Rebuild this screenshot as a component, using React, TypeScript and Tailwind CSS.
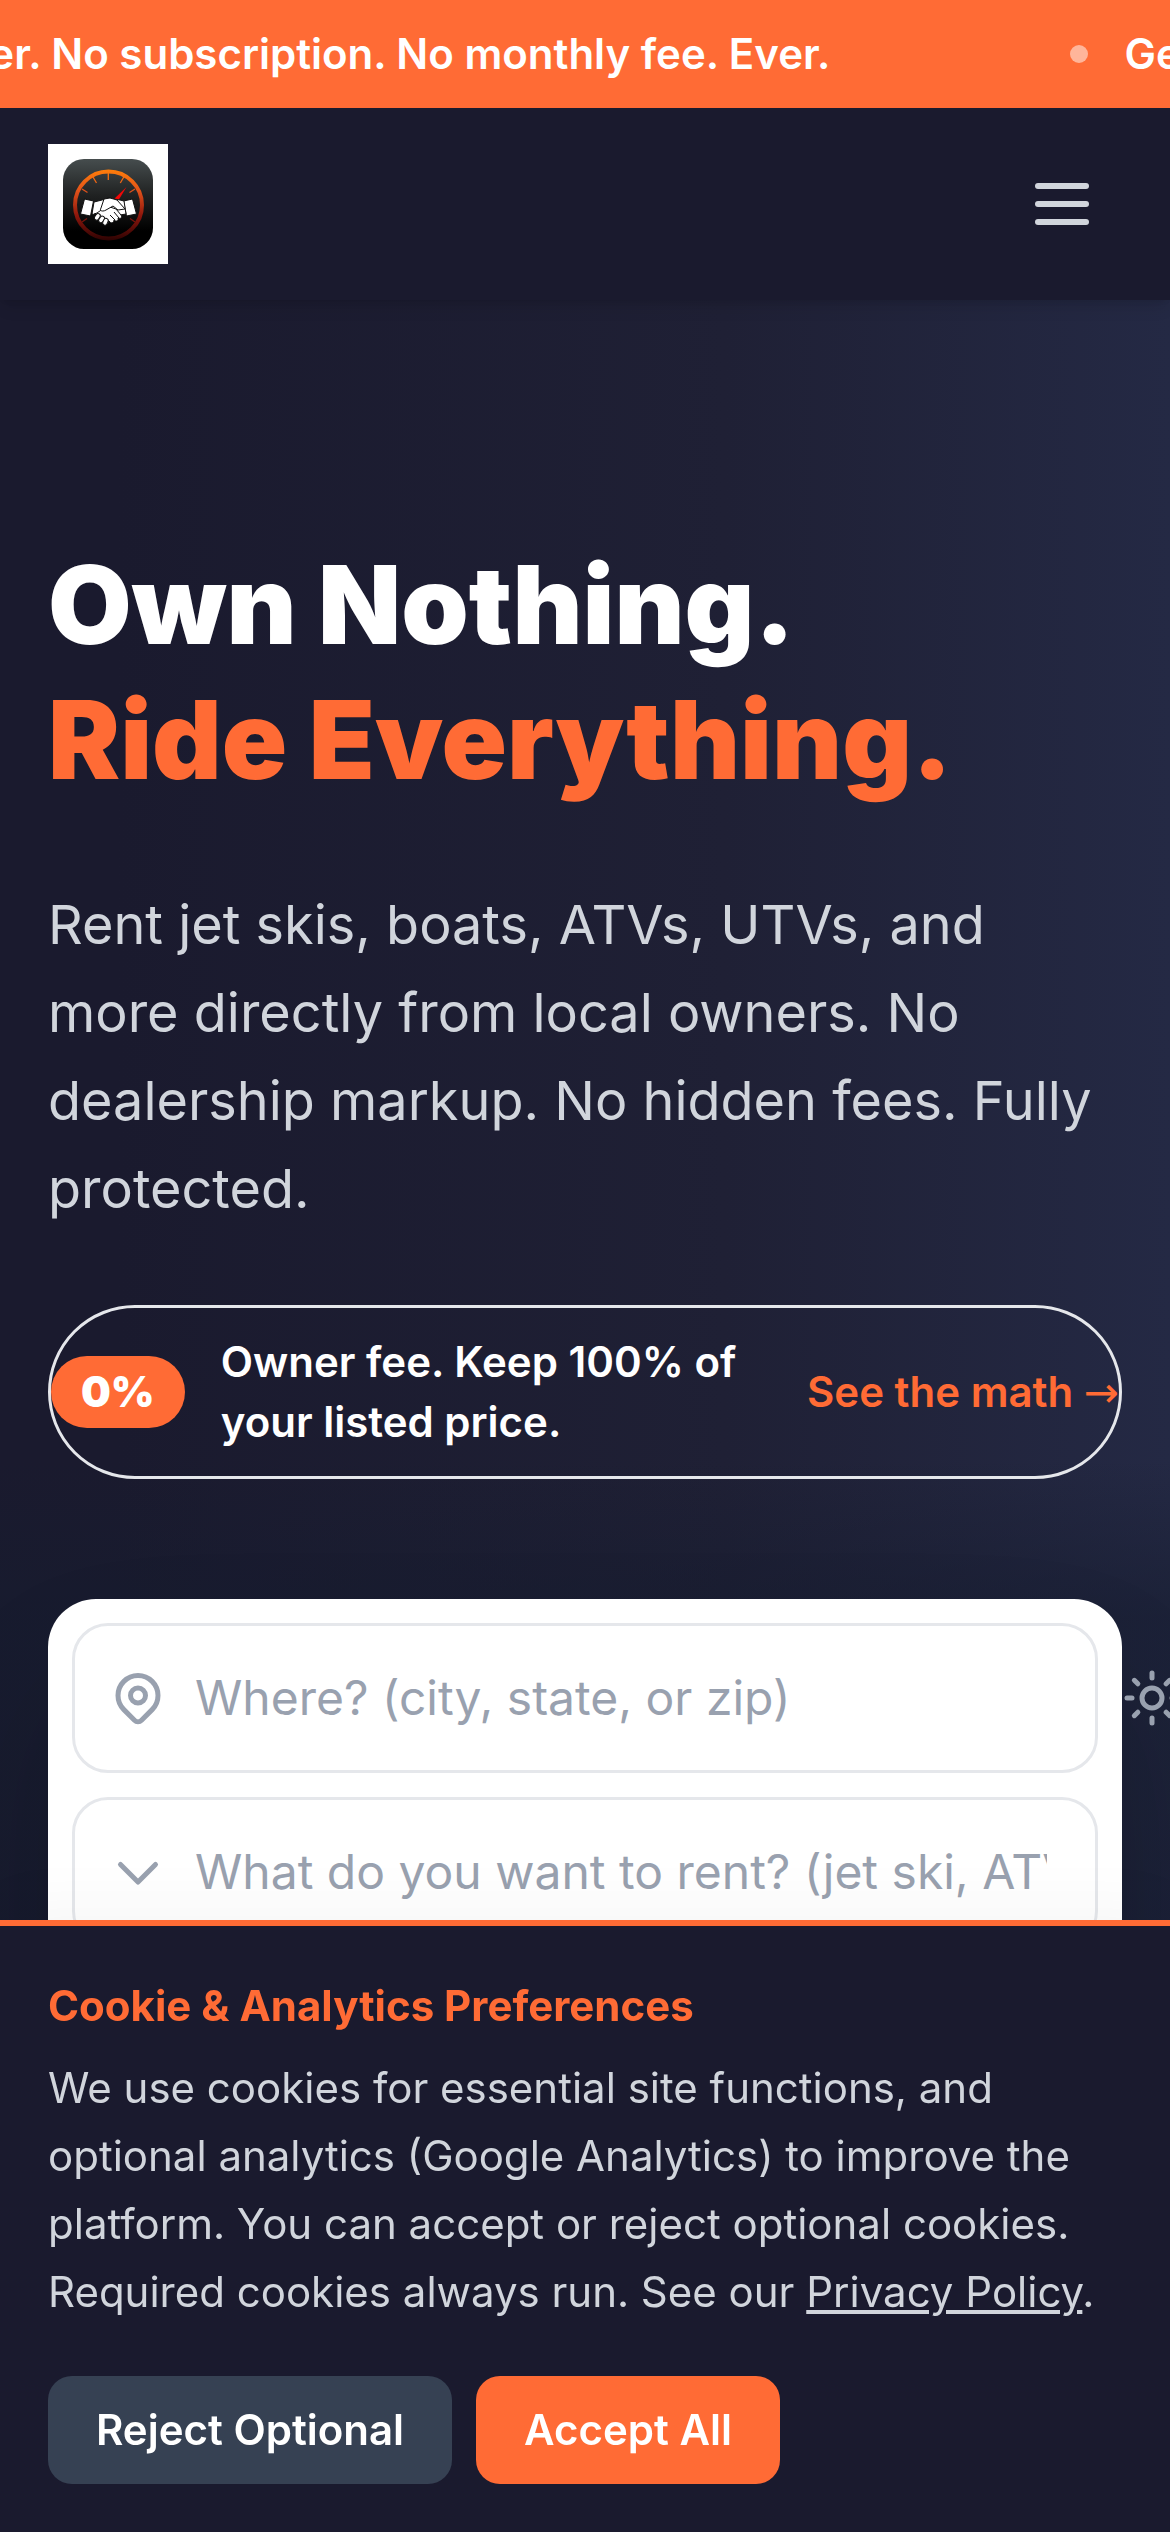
import React from 'react';
import { Sun } from 'lucide-react';

const fieldClass =
  'block w-full rounded-[36px] border-3 border-gray-200 bg-transparent py-9 pl-30 pr-12 text-[48px] leading-[72px] text-gray-900 placeholder-gray-400 focus:border-[#ff6b35] focus:outline-none';

const LogoMark: React.FC = () => (
  <svg viewBox="0 0 120 120" className="size-30" role="img" aria-label="Home">
    <defs>
      <linearGradient id="tile" x1="0" y1="0" x2="0" y2="1">
        <stop offset="0" stopColor="#464d4e" />
        <stop offset="0.4" stopColor="#202222" />
        <stop offset="0.8" stopColor="#000" />
      </linearGradient>
      <linearGradient id="dial" gradientUnits="userSpaceOnUse" x1="0" y1="25" x2="0" y2="97">
        <stop offset="0" stopColor="#ff7f0a" />
        <stop offset="0.3" stopColor="#e2521a" />
        <stop offset="0.65" stopColor="#8d160c" />
        <stop offset="1" stopColor="#2a0202" />
      </linearGradient>
    </defs>
    <rect width="120" height="120" fill="#fff" />
    <rect x="15" y="15" width="90" height="90" rx="21" fill="url(#tile)" />
    <g fill="none" stroke="url(#dial)">
      <circle cx="60.500" cy="61" r="33.500" strokeWidth="4" />
      <path
        strokeWidth="1.300"
        d="M60.300 29v7M45 33l3.500 6M75.800 33l-3.500 6M34 45l5.500 3.500M87 45l-5.500 3.500M34 78l5-3.500M87 78l-5-3.500"
      />
    </g>
    <path d="M78.500 43 66 55l4 2z" fill="#f00808" />
    {/* Handshake */}
    <g fill="#fff" stroke="#111" strokeWidth="1" strokeLinejoin="round">
      <path d="M36.500 55l9 2-3 15-10-2z" />
      <path d="M84.500 55l-9 2 3 15 10-2z" />
      <path d="M46 58l8-2 6-2 12 2 4 1 2 13-6 1-6-5-8-4-9 9-5-1z" />
      <path d="M46 70l3-1 10-7 9 3 5 6c2 3-1 4-3 3 1 3-2 4-4 2 0 3-3 4-5 1-1 4-5 5-7 2-3 0-4-2-4-3-3-1-4-3-1-5z" />
      <path d="M56 55l6-1 7 2 8 9-7 1-5-4-7 4c-3 2-7 1-5-2z" />
      <path fill="none" d="M66 68l5 6M62 71l5 5M58 74l3 4" />
      <rect x="47.500" y="69" width="4.500" height="7" rx="2.200" transform="rotate(35 49 72)" />
      <rect x="51.500" y="71.500" width="4.500" height="7" rx="2.200" transform="rotate(35 53 75)" />
      <rect x="55.500" y="74" width="4.500" height="7" rx="2.200" transform="rotate(25 57 77)" />
    </g>
  </svg>
);

const Announcement: React.FC = () => (
  <div className="flex h-27 items-center overflow-hidden whitespace-nowrap bg-[#ff6b35] text-[42px] leading-[60px] font-semibold text-white">
    <p className="-ml-15 shrink-0">Ever. No subscription. No monthly fee. Ever.</p>
    <p className="ml-60 flex shrink-0 items-center gap-9">
      <span className="size-[18px] rounded-full bg-white/50" />
      Get started
    </p>
  </div>
);

const Header: React.FC = () => (
  <header className="relative z-10 flex h-48 items-center justify-between bg-[#1a1a2e] px-12 shadow-lg">
    <a href="#">
      <LogoMark />
    </a>
    <button type="button" aria-label="Open menu" className="flex flex-col gap-3 p-[33px]">
      <span className="h-1.5 w-[54px] rounded-[3px] bg-gray-300" />
      <span className="h-1.5 w-[54px] rounded-[3px] bg-gray-300" />
      <span className="h-1.5 w-[54px] rounded-[3px] bg-gray-300" />
    </button>
  </header>
);

const FieldIcon: React.FC<{ children: React.ReactNode }> = ({ children }) => (
  <svg
    viewBox="0 0 24 24"
    className="pointer-events-none absolute top-[45px] left-9 size-15 text-gray-400"
    fill="none"
    stroke="currentColor"
    strokeWidth="2"
    strokeLinecap="round"
    strokeLinejoin="round"
  >
    {children}
  </svg>
);

const SearchCard: React.FC = () => (
  <div className="relative mt-30">
    <form className="flex flex-col gap-6 rounded-[48px] bg-white p-6 pb-48 shadow-[0_75px_150px_-36px_rgba(0,0,0,0.25)]">
      <div className="relative">
        <FieldIcon>
          <path d="M17.657 16.657L13.414 20.900a2 2 0 01-2.827 0l-4.244-4.243a8 8 0 1111.314 0z" />
          <path d="M15 11a3 3 0 11-6 0 3 3 0 016 0z" />
        </FieldIcon>
        <input type="text" aria-label="Location" placeholder="Where? (city, state, or zip)" className={fieldClass} />
      </div>
      <div className="relative">
        <FieldIcon>
          <path d="M19 9l-7 7-7-7" />
        </FieldIcon>
        <input
          type="text"
          aria-label="Rental type"
          placeholder="What do you want to rent? (jet ski, ATV, boat...)"
          className={fieldClass}
        />
      </div>
    </form>
    {/* Theme toggle hangs off the edge of the card */}
    <button type="button" aria-label="Toggle theme" className="absolute top-[69px] left-full text-gray-400">
      <Sun className="size-15" />
    </button>
  </div>
);

const Hero: React.FC = () => (
  <section className="flex-1 bg-[linear-gradient(to_bottom,transparent_52%,#161c2f99_59%),linear-gradient(to_right,#1a1a2e_10%,#1f2035_62%,#242944_100%)] px-12 pt-[237px]">
    <h1 className="text-[108px] leading-[135px] font-black text-white">
      Own Nothing.
      <span className="block text-[#ff6b35]">Ride Everything.</span>
    </h1>
    <p className="mt-[74px] text-[54px] leading-[88px] text-gray-300">
      Rent jet skis, boats, ATVs, UTVs, and more directly from local owners. No dealership markup. No hidden fees. Fully
      protected.
    </p>
    <div className="mt-18 flex items-center gap-9 rounded-full border-3 border-gray-200 py-6 text-[42px] leading-[60px] font-semibold text-white">
      <span className="shrink-0 rounded-full bg-[#ff6b35] px-[30px] py-1.5 font-black">0%</span>
      <span className="flex-1">Owner fee. Keep 100% of your listed price.</span>
      <a href="#" className="shrink-0 text-[#ff6b35]">
        See the math <span className="font-['DejaVu_Sans',sans-serif] font-normal">→</span>
      </a>
    </div>
    <SearchCard />
  </section>
);

const CookieBanner: React.FC = () => (
  <section
    aria-label="Cookie preferences"
    className="fixed inset-x-0 bottom-0 z-20 border-t-6 border-[#ff6b35] bg-[#1a1a2e] p-12 text-[42px] shadow-[0_-12px_60px_rgba(0,0,0,0.04)]"
  >
    <h2 className="mb-4 leading-[64px] font-bold text-[#ff6b35]">Cookie &amp; Analytics Preferences</h2>
    <p className="leading-[68px] text-gray-300">
      We use cookies for essential site functions, and optional analytics (Google Analytics) to improve the platform.
      You can accept or reject optional cookies. Required cookies always run. See our{' '}
      <a href="#" className="underline">
        Privacy Policy
      </a>
      .
    </p>
    <div className="mt-[50px] flex gap-6 leading-[60px] font-semibold text-white">
      <button type="button" className="rounded-3xl bg-gray-700 px-12 py-6">
        Reject Optional
      </button>
      <button type="button" className="rounded-3xl bg-[#ff6b35] px-12 py-6">
        Accept All
      </button>
    </div>
  </section>
);

const App: React.FC = () => (
  <div className="flex h-screen flex-col overflow-hidden bg-[#1a1a2e] font-['Inter',sans-serif]">
    <Announcement />
    <Header />
    <Hero />
    <CookieBanner />
  </div>
);

export default App;
